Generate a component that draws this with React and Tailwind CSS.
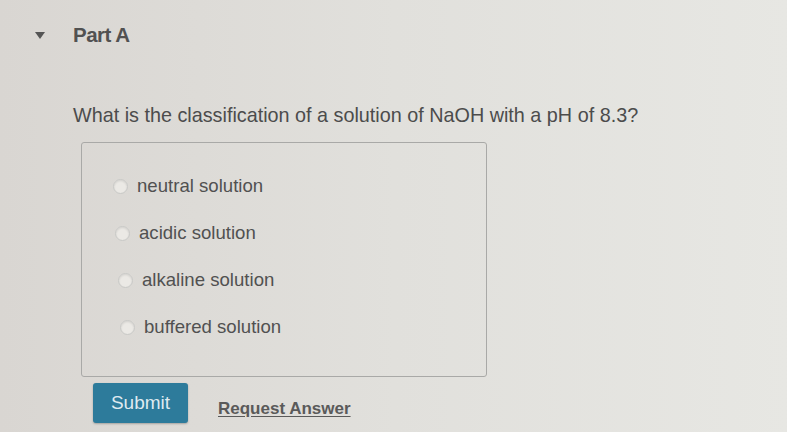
const options = [
  { label: 'neutral solution', shift: 'ml-0' },
  { label: 'acidic solution', shift: 'ml-[2px]' },
  { label: 'alkaline solution', shift: 'ml-[5px]' },
  { label: 'buffered solution', shift: 'ml-[7px]' },
]

function Radio() {
  return (
    <span className="block w-[15px] h-[15px] rounded-full border border-[#c8c8c6] bg-[#ebe9e5] shadow-[inset_0_1px_2px_rgba(0,0,0,0.1)]" />
  )
}

export default function App() {
  return (
    <div className="w-[787px] h-[432px] overflow-hidden bg-gradient-to-r from-[#d9d6d2] via-[#e1e0dc] to-[#e7e7e3] text-[#515151] font-['Liberation_Sans',Arial,sans-serif]">
      {/* collapsible header */}
      <div className="flex items-center pt-[22px] h-[48px]">
        <svg className="ml-[35px] w-[10px] h-[7px]" viewBox="0 0 10 7">
          <path d="M0 0 L10 0 L5 7 Z" fill="#555" />
        </svg>
        <span className="ml-[28px] text-[20.5px] font-bold tracking-tight">Part A</span>
      </div>

      <p className="ml-[73px] mt-[56px] text-[19.8px] leading-[22px] text-[#4c4c4c]">
        What is the classification of a solution of NaOH with a pH of 8.3?
      </p>

      {/* answer choices */}
      <div className="ml-[81px] mt-[16px] w-[406px] h-[235px] border border-[#a9a9a7] rounded-[3px] pt-[32px] pl-[31px] flex flex-col gap-[25px]">
        {options.map((o) => (
          <label key={o.label} className={`flex items-center gap-[9px] h-[22px] ${o.shift}`}>
            <Radio />
            <span className="text-[18.6px]">{o.label}</span>
          </label>
        ))}
      </div>

      <div className="flex items-center ml-[93px] mt-[6px]">
        <button className="w-[95px] h-[40px] rounded-[3px] bg-[#2d7b9b] text-[#dfeaf0] text-[19px] shadow-[0_1px_2px_rgba(0,0,0,0.25)]">
          Submit
        </button>
        <a href="#" className="ml-[30px] mt-[12px] text-[17px] font-bold text-[#5a5a5a] underline underline-offset-2">
          Request Answer
        </a>
      </div>
    </div>
  )
}
